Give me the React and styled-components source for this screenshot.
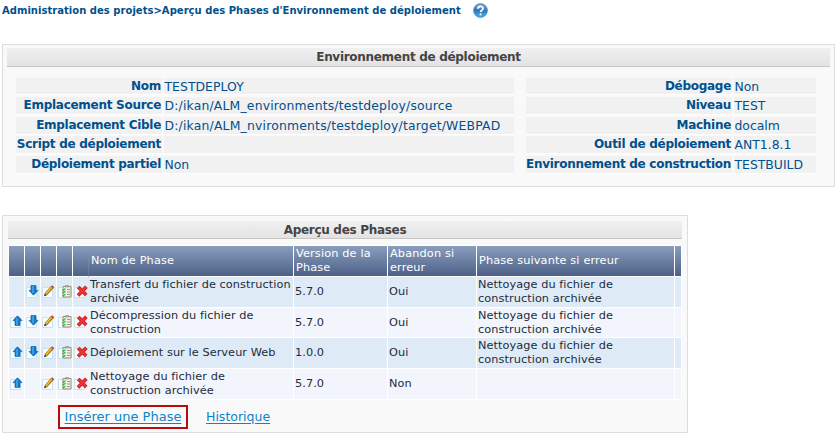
import React from 'react';
import styled, { createGlobalStyle } from 'styled-components';

const Global = createGlobalStyle`
  body { margin: 0; background: #fff; font-family: "DejaVu Sans", Verdana, sans-serif; }
  * { box-sizing: border-box; }
`;

const Page = styled.main`
  width: 840px;
  height: 437px;
  padding-left: 2px;
  overflow: hidden;
`;

const Breadcrumb = styled.nav`
  display: flex;
  align-items: center;
  height: 44px;
  padding-bottom: 23px;
  color: #00508c;
  font-size: 10px;
  font-weight: 700;
  letter-spacing: 0.03px;
  white-space: nowrap;
`;

const HelpIcon = styled.svg`
  width: 15px;
  height: 15px;
  margin-left: 12px;
`;

const Panel = styled.section`
  width: ${(p) => p.$width}px;
  height: ${(p) => p.$height}px;
  margin-bottom: 28px;
  padding: ${(p) => p.$padding};
  border: 1px solid #ddd;
  background: #f9f9f9;
`;

const PanelTitle = styled.h2`
  height: ${(p) => p.$height}px;
  margin: 0;
  border-bottom: 1px solid #c6c6c6;
  background: linear-gradient(#f0f0f0, #e3e3e3);
  color: #444;
  font-size: 12px;
  line-height: 18px;
  letter-spacing: -0.3px;
  text-align: center;
`;

const DetailColumns = styled.div`
  display: flex;
  gap: 12px;
  margin: 11px 0 0 9px;
`;

const DetailGrid = styled.dl`
  display: grid;
  grid-template-columns: ${(p) => p.$columns};
  grid-template-rows: 19px 20px 19px 20px 18px;
  column-gap: 2px;
  margin: 0;
  color: #00508c;
  font-size: 12px;
  line-height: 17px;
  white-space: nowrap;
`;

const Term = styled.dt`
  height: ${(p) => (p.$first ? 17 : 18)}px;
  padding-right: 1px;
  border-bottom: 1px solid #fff;
  background: #f1f1f1;
  font-weight: 700;
  letter-spacing: -0.28px;
  text-align: right;
`;

const Value = styled.dd`
  height: ${(p) => (p.$first ? 17 : 18)}px;
  margin: 0;
  padding-left: 0.5px;
  border-bottom: 1px solid #fff;
  background: #f1f1f1;
  font-size: 12.4px;
  letter-spacing: ${(p) => p.$spacing ?? 0}px;
`;

const PhaseTable = styled.div`
  width: 674px;
  margin: 6px 0 0;
  border: solid #fff;
  border-width: 1px 0 0 1px;
`;

const Row = styled.div`
  display: grid;
  grid-template-columns: 16px 16px 16px 16px 16px 205px 94px 89px 198px 7px;
  height: ${(p) => p.$height}px;
  color: #222b3c;
  background: ${(p) => (p.$alt ? '#f2f6fc' : '#deebf7')};
  font-size: 11.3px;
  line-height: 14px;
  letter-spacing: 0.07px;
  white-space: nowrap;
`;

const HeadRow = styled(Row)`
  background: linear-gradient(#8a9dbd, #4b5f86);
  color: #fff;
  letter-spacing: 0.14px;
`;

const Cell = styled.div`
  display: flex;
  align-items: center;
  padding-left: ${(p) => p.$pad ?? 1}px;
  border-right: ${(p) => (p.$open ? '0' : '1px solid #fff')};
  border-bottom: 1px solid #fff;
`;

const IconCell = styled(Cell)`
  padding: 0 0 2px;
`;

const Seam = styled(Cell)`
  border-right: 1px solid #8395b466;
`;

const Glyph = styled.svg`
  flex: none;
  width: 15px;
  height: 15px;
`;

const Actions = styled.div`
  display: flex;
  align-items: center;
  gap: 18px;
  margin: 5px 0 0 50px;
`;

const Link = styled.a`
  color: #0a84cc;
  font-size: ${(p) => p.$size || 12}px;
  line-height: 16px;
  letter-spacing: ${(p) => p.$spacing || 0}px;
  text-decoration: underline;
  text-underline-offset: 2px;
  white-space: nowrap;
`;

const Highlight = styled.span`
  display: flex;
  align-items: center;
  justify-content: center;
  width: 130px;
  height: 24px;
  border: 2px solid #b80c10;
`;

const Paper = () => <path d="M1.5 3.5h10v10h-10z" fill="#fafdff" stroke="#c5e2f3" />;

const Arrow = ({ up }) => (
  <Glyph viewBox="0 0 15 15">
    <Paper />
    <path
      d="M8.5 1.8 13 6.6H11v4.8H6V6.6H4z"
      transform={up ? undefined : 'rotate(180 8.5 6.5)'}
      fill="#1878c8"
      stroke="#0c60a8"
      strokeWidth=".7"
    />
    <path d={up ? 'M8 4v7' : 'M8 2v7'} stroke="#48a8e8" strokeWidth="1.5" />
  </Glyph>
);

const Pencil = () => (
  <Glyph viewBox="0 0 15 15">
    <Paper />
    <path d="M5 10 11.2 3.2" stroke="#9b6a10" strokeWidth="3.2" />
    <path d="M5 9.6 11 3" stroke="#f4b820" strokeWidth="1.8" />
    <path d="m11 3.5 1.2-1.3" stroke="#b64a38" strokeWidth="3" />
    <path d="m3 12.2.8-3 2.3 2z" fill="#3b3326" />
  </Glyph>
);

const Clipboard = () => (
  <Glyph viewBox="0 0 15 15">
    <Paper />
    <path d="M6 2.5h8v10.5H6z" fill="#f1f3e6" stroke="#9b8c6c" />
    <path d="M8 1.2h4v2.2H8z" fill="#9aa0a0" />
    <path d="M10 5.5h3M10 8h3m-3 2.5h3" stroke="#8c9a9c" />
    <path d="m5.5 5.3 1 1 2-2M5.5 8l1 1 2-2m-3 3.8 1 1 2-2" fill="none" stroke="#36b454" strokeWidth="1.2" />
  </Glyph>
);

const Cross = () => (
  <Glyph viewBox="0 0 15 15">
    <Paper />
    <path d="m5.2 3 8 8m.2-8.2L5 11.5" stroke="#c8161c" strokeWidth="3.6" />
    <path d="M5.4 3.2 13 10.8m.1-7.7L5.5 11" stroke="#ee3434" strokeWidth="2.2" />
  </Glyph>
);

const Help = () => (
  <HelpIcon viewBox="0 0 15 15">
    <defs>
      <linearGradient id="help" x2="0" y2="1">
        <stop stopColor="#7fa9d6" />
        <stop offset=".5" stopColor="#2d78be" />
        <stop offset="1" stopColor="#45b4ee" />
      </linearGradient>
    </defs>
    <circle cx="7.5" cy="7.5" r="6.9" fill="url(#help)" stroke="#4c86bc" strokeWidth=".8" />
    <path d="M5 5.7c.1-3.1 5-3 5-.3 0 1.8-2.3 1.7-2.3 3.7" fill="none" stroke="#fff" strokeWidth="1.8" />
    <circle cx="7.6" cy="11.3" r="1.1" fill="#fff" />
  </HelpIcon>
);

const leftDetails = [
  ['Nom', 'TESTDEPLOY', 0.05],
  ['Emplacement Source', 'D:/ikan/ALM_environments/testdeploy/source', 0.18],
  ['Emplacement Cible', 'D:/ikan/ALM_nvironments/testdeploy/target/WEBPAD', 0.19],
  ['Script de déploiement', ''],
  ['Déploiement partiel', 'Non'],
];

const rightDetails = [
  ['Débogage', 'Non'],
  ['Niveau', 'TEST'],
  ['Machine', 'docalm'],
  ['Outil de déploiement', 'ANT1.8.1'],
  ['Environnement de construction', 'TESTBUILD'],
];

const cleanup = ['Nettoyage du fichier de', 'construction archivée'];

const phases = [
  { name: ['Transfert du fichier de construction', 'archivée'], version: '5.7.0', abort: 'Oui', next: cleanup, down: true, height: 31 },
  { name: ['Décompression du fichier de', 'construction'], version: '5.7.0', abort: 'Oui', next: cleanup, up: true, down: true, height: 30 },
  { name: ['Déploiement sur le Serveur Web'], version: '1.0.0', abort: 'Oui', next: cleanup, up: true, down: true, height: 31 },
  { name: cleanup, version: '5.7.0', abort: 'Non', next: [], up: true, height: 31 },
];

const Lines = ({ lines }) => (
  <div>
    {lines.map((line) => (
      <div key={line}>{line}</div>
    ))}
  </div>
);

const Details = ({ items, columns }) => (
  <DetailGrid $columns={columns}>
    {items.map(([term, value, spacing], i) => (
      <React.Fragment key={term}>
        <Term $first={i === 0}>{term}</Term>
        <Value $first={i === 0} $spacing={spacing}>{value}</Value>
      </React.Fragment>
    ))}
  </DetailGrid>
);

export default function App() {
  return (
    <Page>
      <Global />
      <Breadcrumb>
        <span>Administration des projets&gt;</span>
        <span>Aperçu des Phases d'Environnement de déploiement</span>
        <Help />
      </Breadcrumb>

      <Panel $width={833} $height={143} $padding="3px 4px">
        <PanelTitle $height={19}>Environnement de déploiement</PanelTitle>
        <DetailColumns>
          <Details items={leftDetails} columns="146px 350px" />
          <Details items={rightDetails} columns="206px 82px" />
        </DetailColumns>
      </Panel>

      <Panel $width={686} $height={218} $padding="5px 5px 0">
        <PanelTitle $height={18}>Aperçu des Phases</PanelTitle>
        <PhaseTable>
          <HeadRow $height={31}>
            <Cell /><Cell /><Cell /><Cell />
            <Seam />
            <Cell $pad={2}>Nom de Phase</Cell>
            <Cell $pad={2}><Lines lines={['Version de la', 'Phase']} /></Cell>
            <Cell $pad={2}><Lines lines={['Abandon si', 'erreur']} /></Cell>
            <Cell $pad={2}>Phase suivante si erreur</Cell>
            <Cell />
          </HeadRow>
          {phases.map((p, i) => (
            <Row key={p.name[0]} $height={p.height} $alt={i % 2 === 1}>
              <IconCell>{p.up && <Arrow up />}</IconCell>
              <IconCell>{p.down && <Arrow />}</IconCell>
              <IconCell><Pencil /></IconCell>
              <IconCell><Clipboard /></IconCell>
              <IconCell $open><Cross /></IconCell>
              <Cell><Lines lines={p.name} /></Cell>
              <Cell>{p.version}</Cell>
              <Cell>{p.abort}</Cell>
              <Cell><Lines lines={p.next} /></Cell>
              <Cell />
            </Row>
          ))}
        </PhaseTable>
        <Actions>
          <Highlight><Link $size={13}>Insérer une Phase</Link></Highlight>
          <Link $size={12.5}>Historique</Link>
        </Actions>
      </Panel>
    </Page>
  );
}
